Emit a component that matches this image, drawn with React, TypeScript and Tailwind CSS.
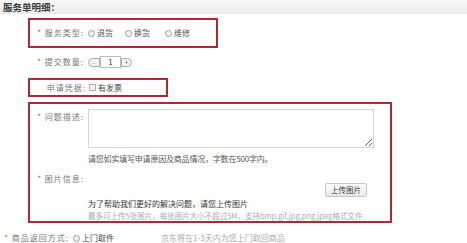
import React from 'react';

const font = { fontFamily: '"Noto Sans CJK SC", "Noto Sans", sans-serif' };

const Radio: React.FC<{ label: string; className?: string }> = ({ label, className }) => (
  <span className={`flex items-center gap-[2px] ${className || ''}`}>
    <span className="w-[7px] h-[7px] rounded-full border border-[#9a9a9a] bg-[#f2f2f2] shadow-[inset_0_0_1px_#fff]" />
    <span>{label}</span>
  </span>
);

const App: React.FC = () => {
  return (
    <div className="w-[467px] h-[243px] bg-white overflow-hidden text-[8px] leading-[10px] text-[#777]" style={font}>
      <div className="h-[14px] bg-gradient-to-b from-[#f9f9f9] to-[#ebebeb] pl-[3px] flex items-center text-[9.5px] font-bold text-[#3a3a3a]">
        服务单明细：
      </div>

      {/* 服务类型 */}
      <div className="mt-[4px] ml-[28px] w-[190px] h-[30px] border-2 border-[#ab2a34] flex items-center">
        <span className="w-[56px] pr-[2px] text-right tracking-[1px]">* 服务类型:</span>
        <Radio label="退货" className="ml-[2px] text-[#555]" />
        <Radio label="换货" className="ml-[12px] text-[#555]" />
        <Radio label="维修" className="ml-[15px] text-[#555]" />
      </div>

      {/* 提交数量 */}
      <div className="mt-[8px] h-[12px] flex items-center">
        <span className="w-[86px] pr-[2px] text-right tracking-[1px]">* 提交数量:</span>
        <div className="ml-[2px] flex items-center">
          <span className="w-[12px] h-[9px] rounded-l-full border border-[#aaa] bg-[#f3f3f3] flex items-center justify-center text-[#777] text-[7px]">-</span>
          <span className="w-[21px] h-[12px] border border-[#bbb] flex items-center justify-center text-[#333]">1</span>
          <span className="w-[11px] h-[9px] rounded-r-full border border-[#aaa] bg-[#f3f3f3] flex items-center justify-center text-[#777] text-[7px]">+</span>
        </div>
      </div>

      {/* 申请凭据 */}
      <div className="mt-[10px] ml-[28px] w-[140px] h-[19px] border-2 border-[#ab2a34] flex items-center">
        <span className="w-[58px] pr-[2px] text-right tracking-[1px]">申请凭据:</span>
        <span className="ml-[1px] w-[7px] h-[7px] border border-[#aaa] bg-[#f4f4f4]" />
        <span className="ml-[2px] text-[#444]">有发票</span>
      </div>

      {/* 问题描述 / 图片信息 */}
      <div className="mt-[5px] ml-[28px] w-[364px] h-[121px] border-2 border-[#ab2a34]">
        <div className="flex pt-[5px]">
          <span className="w-[58px] pr-[4px] pt-[3px] text-right tracking-[1px]">* 问题描述:</span>
          <div className="flex flex-col">
            <textarea
              readOnly
              className="w-[286px] h-[39px] border border-[#cfd6d6] bg-white resize outline-none"
            />
            <span className="mt-[6px] text-[#555] tracking-[-0.2px]">请您如实填写申请原因及商品情况，字数在500字内。</span>
          </div>
        </div>
        <div className="flex mt-[10px]">
          <span className="w-[58px] pr-[4px] text-right tracking-[1px]">* 图片信息:</span>
          <div className="flex flex-col w-[279px]">
            <div className="mt-[9px] flex justify-end">
              <span className="w-[42px] h-[14px] border border-[#c4c4c4] rounded-[2px] bg-gradient-to-b from-white to-[#e8e8e8] flex items-center justify-center text-[#333] text-[7.5px]">
                上传图片
              </span>
            </div>
            <span className="mt-[2px] text-[#333]">为了帮助我们更好的解决问题，请您上传图片</span>
            <span className="mt-[2px] text-[#aaa] text-[7.5px] whitespace-nowrap">最多可上传5张图片，每张图片大小不超过5M，支持bmp,gif,jpg,png,jpeg格式文件</span>
          </div>
        </div>
      </div>

      {/* 商品返回方式 */}
      <div className="mt-[10px] h-[10px] flex items-center">
        <span className="w-[71px] pr-[2px] text-right tracking-[1px]">* 商品返回方式:</span>
        <Radio label="上门取件" className="ml-[2px] text-[#444]" />
        <span className="ml-[47px] text-[#aaa]">京东将在1-3天内为您上门取回商品</span>
      </div>
    </div>
  );
};

export default App;
